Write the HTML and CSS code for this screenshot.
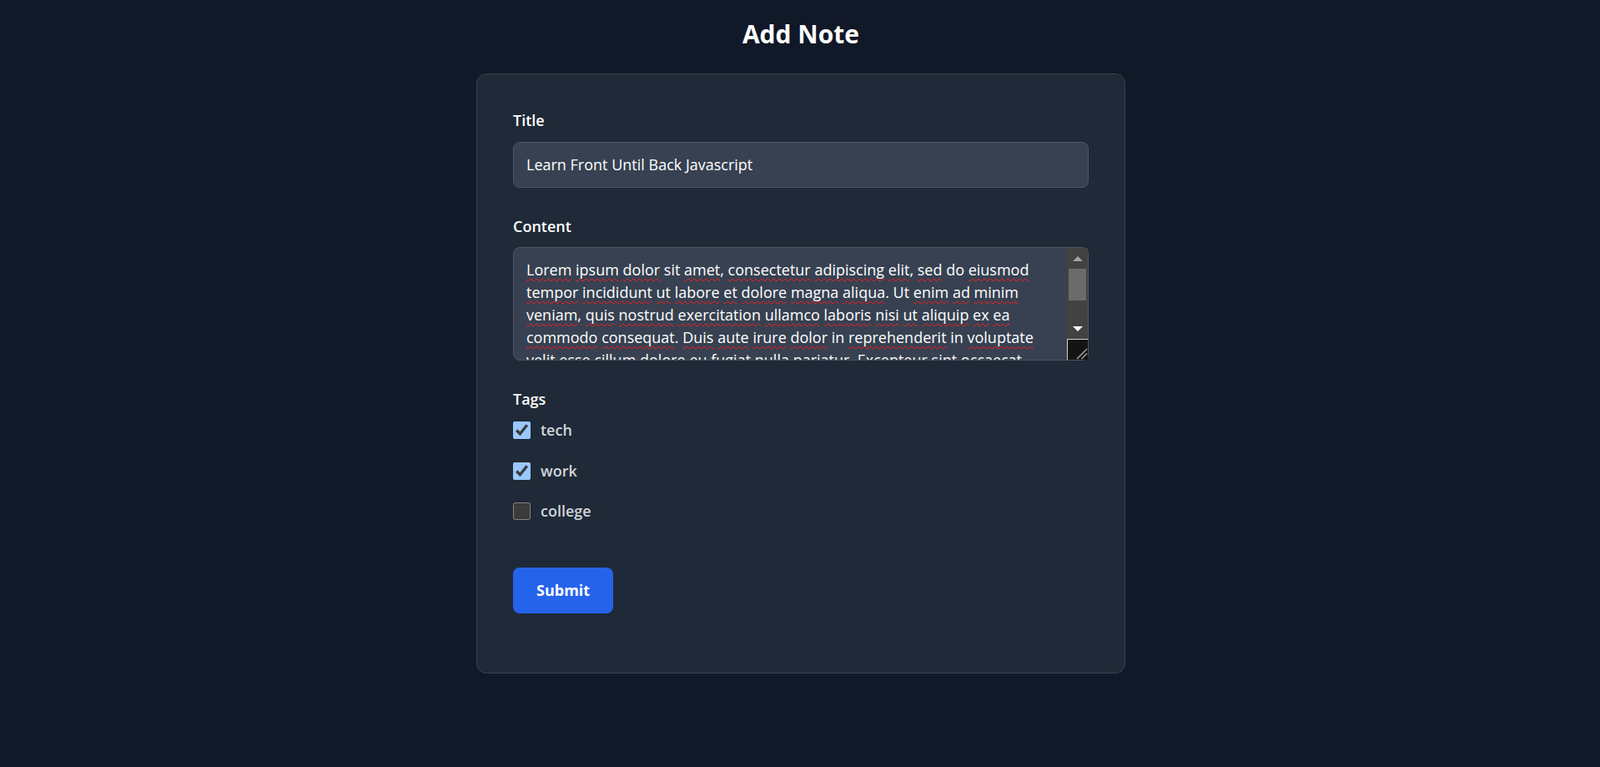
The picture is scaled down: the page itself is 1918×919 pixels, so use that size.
FILE: index.html
```html
<!DOCTYPE html>
<html lang="en">
<head>
<meta charset="utf-8">
<title>Add Note</title>
<link rel="stylesheet" href="styles.css">
</head>
<body>
<main class="page">
  <h1 class="page-title">Add Note</h1>
  <form class="card">
    <div class="field">
      <label class="field-label" for="title">Title</label>
      <input class="text-input" id="title" type="text" value="Learn Front Until Back Javascript">
    </div>
    <div class="field field-content">
      <label class="field-label" id="content-label">Content</label>
      <div class="area-wrap">
        <div class="text-area" role="textbox" aria-multiline="true" aria-labelledby="content-label" contenteditable="true"><span class="sp">Lorem</span> <span class="sp">ipsum</span> <span class="sp">dolor</span> sit <span class="sp">amet</span>, <span class="sp">consectetur</span> <span class="sp">adipiscing</span> <span class="sp">elit</span>, <span class="sp">sed</span> do <span class="sp">eiusmod</span> <span class="sp">tempor</span> <span class="sp">incididunt</span> <span class="sp">ut</span> <span class="sp">labore</span> <span class="sp">et</span> <span class="sp">dolore</span> <span class="sp">magna</span> <span class="sp">aliqua</span>. Ut <span class="sp">enim</span> <span class="sp">ad</span> <span class="sp">minim</span> <span class="sp">veniam</span>, <span class="sp">quis</span> <span class="sp">nostrud</span> <span class="sp">exercitation</span> <span class="sp">ullamco</span> <span class="sp">laboris</span> <span class="sp">nisi</span> <span class="sp">ut</span> <span class="sp">aliquip</span> <span class="sp">ex</span> <span class="sp">ea</span> <span class="sp">commodo</span> <span class="sp">consequat</span>. <span class="sp">Duis</span> <span class="sp">aute</span> <span class="sp">irure</span> <span class="sp">dolor</span> in <span class="sp">reprehenderit</span> in <span class="sp">voluptate</span> <span class="sp">velit</span> <span class="sp">esse</span> <span class="sp">cillum</span> <span class="sp">dolore</span> <span class="sp">eu</span> <span class="sp">fugiat</span> <span class="sp">nulla</span> <span class="sp">pariatur</span>. <span class="sp">Excepteur</span> <span class="sp">sint</span> <span class="sp">occaecat</span> <span class="sp">cupidatat</span> non <span class="sp">proident</span>, <span class="sp">sunt</span> in <span class="sp">culpa</span> qui <span class="sp">officia</span> <span class="sp">deserunt</span> <span class="sp">mollit</span> <span class="sp">anim</span> id est <span class="sp">laborum</span>.</div>
        <div class="scrollbar" aria-hidden="true">
          <span class="sb-btn"><span class="sb-arrow-up"></span></span>
          <span class="sb-track"><span class="sb-thumb"></span></span>
          <span class="sb-btn"><span class="sb-arrow-down"></span></span>
          <span class="sb-corner">
            <svg class="sb-grip" width="24" height="24" viewBox="0 0 24 24"><line x1="11" y1="23" x2="23" y2="11" stroke="#9a9a9a" stroke-width="1.6"/><line x1="16.5" y1="23" x2="23" y2="16.5" stroke="#9a9a9a" stroke-width="1.6"/></svg>
          </span>
        </div>
      </div>
    </div>
    <div class="field-label field-label-tags">Tags</div>
    <div class="tags">
      <label class="tag"><input class="tag-check" type="checkbox" checked> <span>tech</span></label>
      <label class="tag"><input class="tag-check" type="checkbox" checked> <span>work</span></label>
      <label class="tag"><input class="tag-check" type="checkbox"> <span>college</span></label>
    </div>
    <button class="submit" type="button">Submit</button>
  </form>
</main>
</body>
</html>
```

FILE: styles.css
```css
* {
  box-sizing: border-box;
}

html, body {
  margin: 0;
  padding: 0;
}

body {
  background: #111827;
  color: #ffffff;
  font-family: "Open Sans", "Noto Sans", sans-serif;
  font-size: 18px;
  line-height: 27px;
}

.page {
  display: flex;
  flex-direction: column;
  align-items: center;
  padding-top: 20px;
  padding-left: 2px;
}

.page-title {
  margin: 0 0 27px;
  font-size: 30px;
  line-height: 41px;
  font-weight: 700;
  color: #ffffff;
}

.card {
  width: 778px;
  background: #1f2937;
  border: 1px solid #374151;
  border-radius: 12px;
  padding: 42px 43px 71px;
  display: flex;
  flex-direction: column;
  align-items: flex-start;
}

.field {
  width: 100%;
  margin-bottom: 33px;
}

.field-content {
  margin-bottom: 33px;
}

.field-label {
  display: block;
  font-size: 18px;
  line-height: 27px;
  font-weight: 600;
  color: #ffffff;
  margin-bottom: 11.5px;
}

.field-label-tags {
  margin-bottom: 10px;
}

.text-input,
.text-area {
  display: block;
  width: 100%;
  background: #374151;
  border: 1px solid #4b5563;
  border-radius: 8px;
  color: #ffffff;
  font-family: inherit;
  font-size: 18px;
  line-height: 27px;
  padding: 13px 15px;
  margin: 0;
  outline: none;
}

.text-input {
  height: 55px;
}

.area-wrap {
  position: relative;
  width: 100%;
}

.text-area {
  height: 136px;
  overflow: hidden;
  padding-right: 40px;
  overflow-wrap: break-word;
}

.sp {
  text-decoration-line: underline;
  text-decoration-style: wavy;
  text-decoration-color: #ff1a1a;
  text-decoration-thickness: 1.2px;
  text-underline-offset: 3px;
  text-decoration-skip-ink: none;
}

.scrollbar {
  position: absolute;
  top: 1px;
  right: 1px;
  bottom: 1px;
  width: 25px;
  display: flex;
  flex-direction: column;
  background: #424242;
}

.sb-btn {
  height: 25px;
  flex: none;
  display: flex;
  align-items: center;
  justify-content: center;
}

.sb-arrow-up {
  width: 0;
  height: 0;
  border-left: 6px solid transparent;
  border-right: 6px solid transparent;
  border-bottom: 6px solid #a3a3a3;
}

.sb-arrow-down {
  width: 0;
  height: 0;
  border-left: 6px solid transparent;
  border-right: 6px solid transparent;
  border-top: 6px solid #ffffff;
}

.sb-track {
  flex: 1;
  display: flex;
  flex-direction: column;
}

.sb-thumb {
  height: 38px;
  margin: 0 2px;
  background: #6b6b6b;
}

.sb-corner {
  height: 25px;
  flex: none;
  background: #141414;
  border-top: 1px solid #d4d4d4;
  border-left: 1px solid #d4d4d4;
  display: flex;
  align-items: flex-end;
  justify-content: flex-end;
}

.sb-grip {
  display: block;
}

.tags {
  display: flex;
  flex-direction: column;
  gap: 21.5px;
}

.tag {
  display: flex;
  align-items: center;
  gap: 12px;
  height: 27px;
  font-size: 18px;
  font-weight: 600;
  color: #d1d5db;
}

.tag-check {
  color-scheme: dark;
  width: 21px;
  height: 21px;
  margin: 0;
}

.submit {
  margin-top: 54px;
  background: #2563eb;
  color: #ffffff;
  border: none;
  border-radius: 8px;
  padding: 14px 28px;
  font-family: inherit;
  font-size: 18px;
  line-height: 27px;
  font-weight: 700;
  cursor: pointer;
}
```
